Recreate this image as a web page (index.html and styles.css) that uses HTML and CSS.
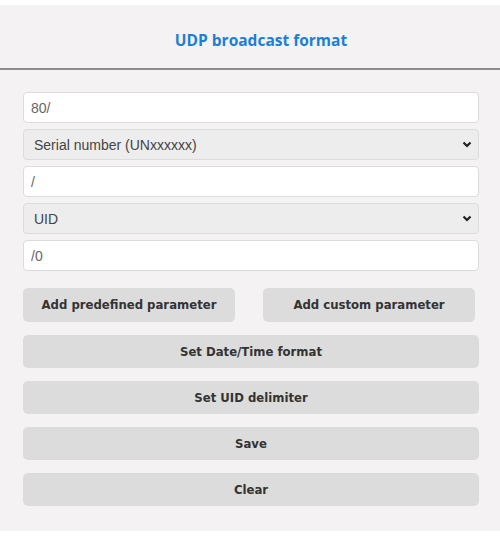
FILE: index.html
```html
<!DOCTYPE html>
<html lang="en">
<head>
  <meta charset="UTF-8" />
  <meta name="viewport" content="width=device-width, initial-scale=1" />
  <title>UDP broadcast format</title>
  <link rel="stylesheet" href="styles.css">
</head>
<body>

  <div class="page">
    <div class="header">
      <h1>UDP broadcast format</h1>
    </div>

    <div class="format-container">
      <input type="text" value="80/" />
      <div class="select-wrap">
        <select>
          <option>Serial number (UNxxxxxx)</option>
        </select>
        <svg class="chevron" width="10" height="7" viewBox="0 0 10 7"><path d="M1.5 1.5 L5 5 L8.5 1.5" fill="none" stroke="#222" stroke-width="2.2"/></svg>
      </div>
      <input type="text" value="/" />
      <div class="select-wrap">
        <select>
          <option>UID</option>
        </select>
        <svg class="chevron" width="10" height="7" viewBox="0 0 10 7"><path d="M1.5 1.5 L5 5 L8.5 1.5" fill="none" stroke="#222" stroke-width="2.2"/></svg>
      </div>
      <input type="text" value="/0" />

      <div class="btn-row">
        <button>Add predefined parameter</button>
        <button>Add custom parameter</button>
      </div>
      <button class="wide">Set Date/Time format</button>
      <button class="wide">Set UID delimiter</button>
      <button class="wide">Save</button>
      <button class="wide">Clear</button>
    </div>
  </div>

</body>
</html>
```

FILE: styles.css
```css
body {
  margin: 0;
  background-color: #ffffff;
  font-family: 'Liberation Sans', Arial, sans-serif;
}

.page {
  margin-top: 5px;
  height: 526px;
  background-color: #f4f2f2;
}

.header {
  box-sizing: border-box;
  height: 65px;
  padding-top: 6px;
  border-bottom: 2px solid #8c8c8c;
  display: flex;
  align-items: center;
  justify-content: center;
}

h1 {
  margin: 0;
  color: #1b7fd3;
  font-family: 'Open Sans', sans-serif;
  font-size: 15.5px;
  font-weight: bold;
  padding-left: 22px;
}

.format-container {
  padding: 22px 21px 0 23px;
  display: flex;
  flex-direction: column;
}

input, select {
  box-sizing: border-box;
  width: 100%;
  height: 31px;
  border: 1px solid #dcdcdc;
  border-radius: 4px;
  font-family: 'Liberation Sans', Arial, sans-serif;
  font-size: 14px;
  margin: 0 0 6px 0;
}

input {
  background-color: #ffffff;
  color: #666;
  padding: 0 7px;
}

select {
  appearance: none;
  -webkit-appearance: none;
  background-color: #ededed;
  color: #444;
  padding: 0 10px;
}

.select-wrap {
  position: relative;
}

.chevron {
  position: absolute;
  right: 7px;
  top: 12px;
}

button {
  box-sizing: border-box;
  height: 33px;
  border: none;
  border-radius: 5px;
  background-color: #dcdcdc;
  color: #333;
  font-family: 'DejaVu Sans', Verdana, sans-serif;
  font-size: 11.7px;
  font-weight: bold;
  cursor: pointer;
}

.btn-row {
  display: flex;
  justify-content: space-between;
  margin: 11px 0 13px 0;
  padding-right: 4px;
  height: 34px;
}

.btn-row button {
  width: 212px;
  height: 34px;
}

.wide {
  width: 100%;
  margin-bottom: 13px;
}
```
